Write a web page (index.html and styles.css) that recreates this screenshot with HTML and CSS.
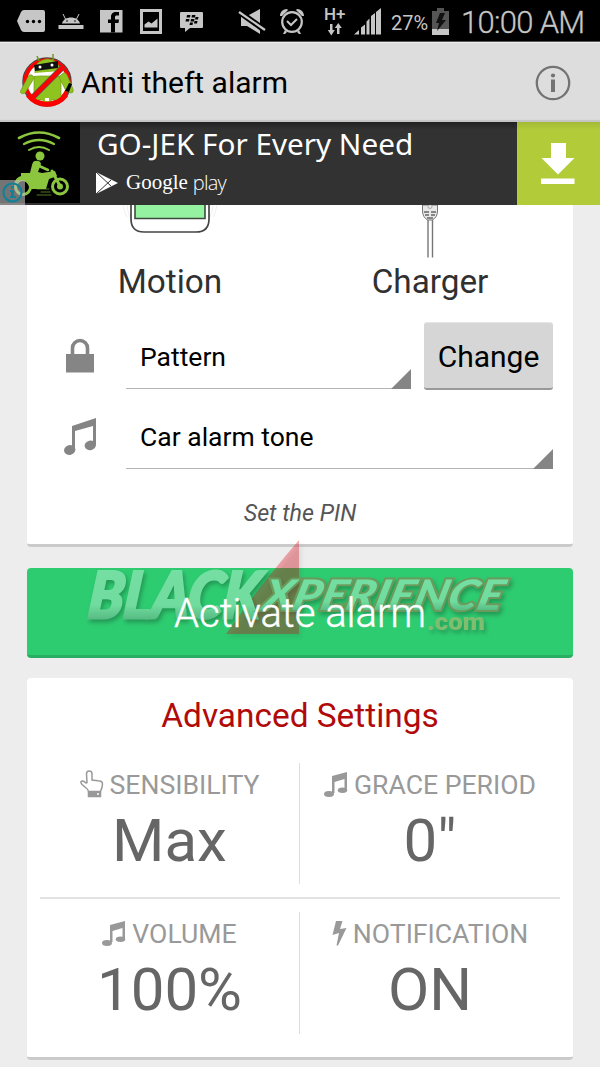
FILE: index.html
```html
<!DOCTYPE html>
<html lang="en">
<head>
    <meta charset="utf-8">
    <title>Anti theft alarm</title>
    <link rel="stylesheet" href="styles.css">
</head>
<body>
    <div class="status-bar">
        <svg class="status-icons" width="220" height="41" viewBox="0 0 220 41" fill="#c6c6c6">
            <!-- more -->
            <path d="M24 10h19q2 0 2 2v18q0 2-2 2H24q-2 0-3-2l-4-9 4-9q1-2 3-2z"/>
            <g fill="#000"><circle cx="27.500" cy="21.500" r="1.700"/><circle cx="33.500" cy="21.500" r="1.700"/><circle cx="39.500" cy="21.500" r="1.700"/></g>
            <!-- android -->
            <path d="M58.500 25h25v4h-25zM62 23.500c1-4 5-6 9-6s8 2 9 6z"/>
            <path d="M63 14l2.500 5M79 14l-2.500 5" stroke="#c6c6c6" stroke-width="1"/>
            <circle cx="67" cy="21" r=".8" fill="#000"/><circle cx="75" cy="21" r=".8" fill="#000"/>
            <!-- facebook -->
            <path d="M100 10h22.500v22.500H100z"/>
            <path d="M111 32.500V23h-3v-3.500h3V17c0-3.500 2-5 5-5h3v3.500h-2c-1.500 0-2 .5-2 2v2h4l-.5 3.500H115v9.500z" fill="#000"/>
            <!-- picture -->
            <path d="M140 9h22v25h-22zM143 12v19h16V12z" fill-rule="evenodd"/>
            <path d="M144.500 27.500v-3l4-3 3 2 6-5v9z"/>
            <!-- bbm -->
            <path d="M181 12h21q1 0 1 1v14q0 1-1 1h-12l-5 4v-4h-4q-1 0-1-1V13q0-1 1-1z"/>
            <g fill="#000"><path d="M187 15h3.500l-.5 2.500h-3.500zM192 15h3.500l-.5 2.500h-3.500zM186 19h3.500l-.5 2.500H185.500zM191 19h3.500l-.5 2.500H190.500zM195.500 17h3l-.5 2.500h-3zM194.500 21h3l-.5 2.500h-3zM190 22.500h3l-.5 2.500h-3z"/></g>
        </svg>
        <svg class="status-icons" width="166" height="41" viewBox="220 0 166 41" fill="#c6c6c6">
            <!-- muted -->
            <path d="M241 16h6l13-7v25l-13-8h-6z"/>
            <path d="M238 11l28 20" stroke="#000" stroke-width="6"/>
            <path d="M239 12l26 18" stroke="#c6c6c6" stroke-width="2.200"/>
            <!-- alarm clock -->
            <circle cx="292" cy="22" r="9.800" fill="none" stroke="#c6c6c6" stroke-width="2.200"/>
            <path d="M287 21l4 4 6-6" fill="none" stroke="#c6c6c6" stroke-width="2"/>
            <path d="M280 16c0-4 3-7 7-7l1 1-6 6zM304 16c0-4-3-7-7-7l-1 1 6 6zM285 30l2 2-2 2h-2zM299 30l-2 2 2 2h2z"/>
            <!-- data arrows -->
            <path d="M330 24h2.500v6h2.300l-3.500 5.500-3.500-5.500h2.200zM337 34h2.500v-6h2.300l-3.500-5-3.500 5h2.200z"/>
            <text class="network" x="324" y="20">H+</text>
            <!-- signal -->
            <path d="M354 34.500l5-4.500v4.500zM361 34.500v-7l4-3v10zM366.500 34.500V21.500l3-3v16zM371 34.500V16l4-3v21.500zM376 34.500V12l5-4v26.500z"/>
        </svg>
        <span class="percent">27%</span>
        <svg class="battery" width="17" height="27" viewBox="0 0 17 27">
            <path d="M5 0h7v3h5v24H0V3h5z" fill="#555"/>
            <path d="M0 21h17v6H0z" fill="#c6c6c6"/>
            <path d="M8 5h5l-3 7h4L5 23l2-8H4z" fill="#111"/>
        </svg>
        <span class="clock">10:00 AM</span>
    </div>

    <div class="app-bar">
        <svg class="app-icon" width="54" height="54" viewBox="0 0 54 54">
            <circle cx="27" cy="28" r="24" fill="#fff" stroke="#444" stroke-width="1.500"/>
            <circle cx="27" cy="28" r="21.700" fill="none" stroke="#f00" stroke-width="4"/>
            <g fill="#8fc31f" stroke="#70991c" stroke-width=".7">
                <path d="M15 15c1-7 7-9 12-10 6 0 11 3 12 8v4l-24 3z"/>
                <path d="M14 22h27v21q0 3-3 3h-7v5q-4 1-8 0v-5h-6q-3 0-3-3z"/>
                <path d="M12 21q3 2 1 5L5 39q-3 2-5-1L8 23q1-3 4-2zM42 20q3-3 5 1l6 14q1 4-2 4l-5-2-7-14z"/>
                <path d="M17 2l2 5M33 0v6" stroke-width="1.500"/>
            </g>
            <path d="M14 11l24-4v7l-23 3z" fill="#111"/>
            <circle cx="20" cy="13" r="1.500" fill="#fff"/><circle cx="32" cy="11" r="1.500" fill="#fff"/>
            <path d="M14 19l26-2v1l-20 3-6 1z" fill="#fff"/>
            <path d="M12 44l31-31" stroke="#555" stroke-width="6"/>
            <path d="M11 45l33-33" stroke="#f00" stroke-width="4.500"/>
            <path d="M8 41a24 24 0 0 0 38 0" fill="none" stroke="#f00" stroke-width="5"/>
            <path d="M25 44h4v3h-4z" fill="#fff"/>
            <path d="M49 29l3 1-3 8-4-1z" fill="#000"/>
        </svg>
        <h1>Anti theft alarm</h1>
        <svg width="36" height="36" viewBox="0 0 36 36">
            <circle cx="18" cy="18" r="16.200" fill="none" stroke="#737373" stroke-width="2.300"/>
            <path d="M16 14.500h4V27h-4z" fill="#737373"/>
            <circle cx="18" cy="10.500" r="2.100" fill="#737373"/>
        </svg>
    </div>

    <div class="ad">
        <svg width="80" height="83" viewBox="0 0 80 83">
            <path d="M0 0h80v81H0z" fill="#000"/>
            <g fill="none" stroke="#8cc63f" stroke-linecap="round">
                <path d="M19 16q20-11 40 0" stroke-width="2.600"/>
                <path d="M24 22q15-8 30 0" stroke-width="2.300"/>
                <path d="M29 28q10-6 20 0" stroke-width="2"/>
                <circle cx="23" cy="65" r="7.500" stroke-width="3"/>
                <circle cx="60" cy="64.500" r="7.500" stroke-width="3"/>
                <path d="M37 43l11 5" stroke-width="2.500"/>
                <path d="M52 49l8 15" stroke-width="3"/>
                <path d="M37 67h12M41 70h9M37 73h14" stroke-width=".6"/>
            </g>
            <g fill="#8cc63f">
                <circle cx="40" cy="34" r="4.500"/>
                <circle cx="60" cy="64.500" r="3"/>
                <path d="M35 39q5-1 6 3l-3 8 4 1 13-2 2 5-8 3-3 10H31l-4-6q-5-6-13 1 2-7 7-8v-3h9l2-8q1-4 3-4z"/>
            </g>
            <path d="M0 58h25v25H0z" fill="#bbb" fill-opacity=".62"/>
            <circle cx="12.500" cy="70.500" r="9" fill="none" stroke="#118099" stroke-width="2.200"/>
            <path d="M10 68h4v6h2v2h-6v-2h1v-4h-1zM11 64h3v2.500h-3z" fill="#118099"/>
        </svg>
        <div class="ad-text">
            <div class="ad-title">GO-JEK For Every Need</div>
            <div class="store">
                <svg width="24" height="24" viewBox="0 0 24 24">
                    <path d="M1 1l22 11L1 23z" fill="#fff"/>
                    <path d="M1 1l15 14M1 23L16 9" stroke="#323232" stroke-width="1"/>
                </svg>
                <span class="google">Google</span><span class="play">play</span>
            </div>
        </div>
        <div class="download">
            <svg width="34" height="42" viewBox="0 0 34 42" fill="#fff">
                <path d="M10 0h15v15h8.500L17 31.500.5 15H10zM0 35.500h33.500V41H0z"/>
            </svg>
        </div>
    </div>

    <main>
        <div class="card triggers-card">
            <div class="triggers">
                <div class="trigger">
                    <svg width="100" height="54" viewBox="0 0 100 54" fill="none">
                        <path d="M7 0q0 5 3 12M3 0q1 7 4 12M93 0q0 5-3 12M97 0q-1 7-4 12" stroke="#eee"/>
                        <path d="M11 0v14q0 13 13 13h52q13 0 13-13V0" fill="#fff" stroke="#454545" stroke-width="1.700"/>
                        <path d="M15 0v13.500h70V0" fill="#95f2a0" stroke="#3c4a3e" stroke-width="1.600"/>
                    </svg>
                    <span>Motion</span>
                </div>
                <div class="trigger">
                    <svg width="20" height="54" viewBox="0 0 20 54" fill="#e8e8e8" stroke="#777">
                        <path d="M8 14v38.500M12.500 14v38.500" stroke-width="1.400"/>
                        <path d="M2.500 0v6q0 6 5 9h5q5-3 5-9V0z"/>
                        <path d="M4 7h5M11 7h5M5 10h4M11 10h4M7 13h6" stroke="#666" stroke-width="1.400"/>
                        <circle cx="10" cy="1.500" r="2" stroke="#aaa"/>
                    </svg>
                    <span>Charger</span>
                </div>
            </div>
            <div class="field">
                <svg width="32" height="38" viewBox="0 0 32 38">
                    <path d="M2 16h28v18.500H2z" fill="#858585"/>
                    <path d="M8.500 17V10a7.500 7.500 0 0 1 15 0v7" fill="none" stroke="#858585" stroke-width="3.600"/>
                </svg>
                <div class="spinner">Pattern</div>
                <button class="change">Change</button>
            </div>
            <div class="field">
                <svg width="32" height="38" viewBox="0 0 32 38" fill="#858585">
                    <path d="M8 8l24-8v27h-3V8L11 13v19H8z"/>
                    <ellipse cx="5.700" cy="32" rx="5.700" ry="4.800" transform="rotate(-15 5.700 32)"/>
                    <ellipse cx="26.300" cy="27.300" rx="5.700" ry="4.800" transform="rotate(-15 26.300 27.300)"/>
                </svg>
                <div class="spinner">Car alarm tone</div>
            </div>
            <p class="hint">Set the PIN</p>
        </div>

        <button class="activate">
            <span>Activate alarm</span>
            <svg class="brand" width="450" height="110" viewBox="0 0 450 110">
                <defs>
                    <linearGradient id="shine" x1="0" y1="0" x2="0" y2="1">
                        <stop offset="0" stop-color="#78dfa4"/>
                        <stop offset=".65" stop-color="#70dc9e"/>
                        <stop offset=".85" stop-color="#55b981"/>
                    </linearGradient>
                </defs>
                <path class="sail" d="M229 9v94h-73q35-50 73-94z"/>
                <text class="brand-black" x="17" y="87" textLength="172" lengthAdjust="spacingAndGlyphs" transform="skewX(-6) translate(9)">BLACK</text>
                <text class="brand-xperience" x="192" y="79" textLength="240" lengthAdjust="spacingAndGlyphs" transform="skewX(-14) translate(18)">XPERIENCE</text>
                <text class="brand-com" x="357" y="99" textLength="58" lengthAdjust="spacingAndGlyphs">.com</text>
            </svg>
        </button>

        <div class="card settings">
            <h2>Advanced Settings</h2>
            <div class="settings-grid">
                <div class="setting">
                    <div class="label">
                        <svg width="24" height="28" viewBox="0 0 24 28" fill="none" stroke="#999" stroke-width="1.500">
                            <path d="M8.500 21.500q0-2-3-4L2 14.500Q0 12 1.500 11.200 3.500 10.500 6 13l1-.5-.5-8.500Q6.500 1 9.200 1 12 1 12 4v6l6 .8q4.500.2 4.500 3.200 0 3-2 7.500z"/>
                            <path d="M8.500 22h12v4.500h-12z" fill="#999"/>
                            <path d="M17 24h2" stroke="#fff"/>
                        </svg>
                        <span>SENSIBILITY</span>
                    </div>
                    <div class="value">Max</div>
                </div>
                <div class="setting">
                    <div class="label">
                        <svg width="24" height="28" viewBox="0 0 24 28" fill="#999">
                            <path d="M8 6l15-4v18h-2.500V9L10.500 12v11H8z"/>
                            <ellipse cx="5" cy="24" rx="5" ry="2.900"/><ellipse cx="18.500" cy="20.300" rx="4.700" ry="2.700"/>
                        </svg>
                        <span>GRACE PERIOD</span>
                    </div>
                    <div class="value">0"</div>
                </div>
                <div class="setting">
                    <div class="label">
                        <svg width="24" height="28" viewBox="0 0 24 28" fill="#999">
                            <path d="M8 6l15-4v18h-2.500V9L10.500 12v11H8z"/>
                            <ellipse cx="5" cy="24" rx="5" ry="2.900"/><ellipse cx="18.500" cy="20.300" rx="4.700" ry="2.700"/>
                        </svg>
                        <span>VOLUME</span>
                    </div>
                    <div class="value">100%</div>
                </div>
                <div class="setting">
                    <div class="label">
                        <svg width="15" height="28" viewBox="0 0 15 28" fill="#999">
                            <path d="M4 2h6.500L8 10l6.500-1L6 26.500H4.500L7 14l-6.500 2z"/>
                        </svg>
                        <span>NOTIFICATION</span>
                    </div>
                    <div class="value">ON</div>
                </div>
            </div>
        </div>
    </main>
</body>
</html>
```

FILE: styles.css
```css
* {
    box-sizing: border-box;
}

body {
    margin: 0;
    height: 1067px;
    overflow: hidden;
    background: #ededed;
    color: #000;
    font-family: Roboto, sans-serif;
}

svg {
    display: block;
    flex: none;
}

button {
    border: none;
    padding: 0;
    font-family: inherit;
}

/* Status bar */
.status-bar {
    height: 42px;
    display: flex;
    align-items: center;
    background: #000;
    border-bottom: 1px solid #555;
    color: #c6c6c6;
    white-space: nowrap;
}

.network {
    font-size: 17px;
    font-weight: 500;
}

.percent {
    width: 46px;
    padding: 4px 0 0 5px;
    font-size: 20px;
}

.battery {
    margin-top: 1px;
}

.clock {
    margin: 4px 0 0 12px;
    font-size: 31px;
    font-weight: 300;
    letter-spacing: -0.7px;
    -webkit-text-stroke: 0.3px #c6c6c6;
}

/* Title bar */
.app-bar {
    height: 80px;
    padding: 0 29px 0 20px;
    display: flex;
    align-items: center;
    background: #ddd;
    border-top: 1px solid #eee;
    box-shadow: inset 0 -3px 1px -1px #c4c4c4;
}

.app-icon {
    margin-top: -4px;
}

h1 {
    flex: 1;
    margin: 0 0 0 7px;
    font-size: 30px;
    font-weight: 400;
}

/* Banner */
.ad {
    height: 83px;
    display: flex;
    background: linear-gradient(#222, #323232 8px);
}

.ad-text {
    flex: 1;
    padding-left: 17px;
    color: #fff;
    white-space: nowrap;
}

.ad-title {
    height: 49px;
    font: 29.7px/43px "Noto Sans", sans-serif;
}

.store {
    display: flex;
    align-items: center;
    margin-left: -2px;
}

.google {
    margin: -2px 5px 0 7px;
    font: 21px/24px "Liberation Serif", serif;
}

.play {
    font: 300 20px/24px "Open Sans", sans-serif;
    letter-spacing: -0.8px;
}

.download {
    width: 83px;
    padding: 21px 0 0 24px;
    background: linear-gradient(#a3bb35, #b2cb39 8px);
}

/* Cards */
main {
    padding: 0 27px;
}

.card {
    background: #fff;
    border-bottom: 3px solid #cacaca;
    border-radius: 4px;
}

.triggers-card {
    height: 342px;
    padding: 0 20px 0 37px;
    border-radius: 0 0 4px 4px;
}

.triggers {
    display: flex;
    height: 112px;
    margin: 0 -7px 0 -24px;
}

.trigger {
    flex: 1;
    display: flex;
    flex-direction: column;
    align-items: center;
    color: #303030;
    font-size: 33.3px;
    line-height: 46px;
}

.field {
    display: flex;
    align-items: center;
    height: 80px;
}

.spinner {
    position: relative;
    flex: 1;
    height: 53px;
    margin: 11px 0 0 30px;
    padding-left: 14px;
    border-bottom: 1px solid #b5b5b5;
    font-size: 26.5px;
    line-height: 41px;
}

/* corner mark of a dropdown */
.spinner::after {
    content: "";
    position: absolute;
    right: 0;
    bottom: -1px;
    border-bottom: 20px solid #858585;
    border-left: 20px solid transparent;
}

.change {
    width: 129px;
    height: 68px;
    margin: -2px 0 0 13px;
    background: #d6d6d6;
    border-top: 1px solid #e6e6e6;
    border-bottom: 2px solid #999;
    border-radius: 3px;
    color: #000;
    font-size: 30px;
    line-height: 68px;
}

.hint {
    margin: 22px 17px 0 0;
    color: #555;
    font-size: 23.3px;
    font-style: italic;
    line-height: 28px;
    text-align: center;
}

/* Main button */
.activate {
    position: relative;
    display: block;
    width: 100%;
    height: 90px;
    margin: 21px 0 20px;
    padding-top: 3px;
    background: #2ecc71;
    border-bottom: 3px solid #27ae60;
    border-radius: 4px;
    color: #fff;
    font-size: 40px;
}

.activate span {
    position: relative;
    z-index: 1;
    font-weight: 300;
    -webkit-text-stroke: 0.4px #fff;
}

.brand {
    position: absolute;
    left: 43px;
    top: -37px;
    filter: drop-shadow(2px 3px 2px rgba(0, 0, 0, .25));
}

.sail {
    fill: #e4000f;
    opacity: .32;
}

.brand-black {
    fill: url(#shine);
    stroke: url(#shine);
    stroke-width: 3px;
    font: italic 900 64px Lato, sans-serif;
}

.brand-xperience {
    fill: url(#shine);
    stroke: #6b9b5c;
    stroke-width: 4px;
    paint-order: stroke;
    font: italic 900 42px Lato, sans-serif;
}

.brand-com {
    fill: #7fbd70;
    font: 900 23px Roboto, sans-serif;
}

/* Advanced settings */
.settings {
    height: 382px;
    padding: 0 13px;
}

h2 {
    margin: 0;
    padding-top: 2px;
    height: 85px;
    color: #b10a0a;
    font-size: 33.4px;
    font-weight: 400;
    line-height: 72px;
    text-align: center;
}

.settings-grid {
    display: grid;
    grid-template-columns: 260px 260px;
    grid-template-rows: 121px 122px;
    row-gap: 28px;
    position: relative;
}

.settings-grid::before {
    content: "";
    position: absolute;
    top: 134px;
    width: 100%;
    height: 2px;
    background: #e2e2e2;
}

.setting {
    text-align: center;
}

.setting:nth-child(odd) {
    border-right: 1px solid #ddd;
}

.label {
    display: flex;
    justify-content: center;
    align-items: center;
    gap: 6px;
    height: 42px;
    color: #999;
    font-size: 26.6px;
}

.value {
    color: #666;
    font-size: 60px;
    line-height: 72px;
}
```
